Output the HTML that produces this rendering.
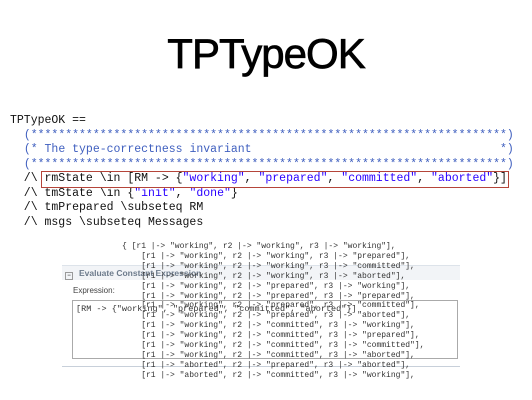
<!DOCTYPE html>
<html><head><style>
body{margin:0;width:532px;height:400px;background:#fff;position:relative;overflow:hidden;font-family:"Liberation Sans",sans-serif}
.t{position:absolute;left:0;width:532px;top:30px;text-align:center;font-size:42px;color:#000;letter-spacing:-1px;-webkit-text-stroke:0.7px #000}
.code{position:absolute;left:10px;top:114px;font-family:"Liberation Mono",monospace;font-size:11.5px;line-height:14.5px;white-space:pre;color:#111}
.c{color:#3f5fbf}.s{color:#2a00ff}
.box{position:absolute;left:41px;top:171px;width:466px;height:15px;border:1px solid #b5453a}
.panel{position:absolute;left:62px;top:265px;width:398px;height:100px;border-top:1px solid #dde3ea;border-bottom:1px solid #c8d0da}
.ph{position:absolute;left:0;top:0;width:398px;height:14px;background:#f2f4f7;font-size:8.5px;font-weight:bold;color:#6d7b8c;line-height:14px}
.ph span{display:inline-block;width:6px;height:6px;border:1px solid #999;margin:0 6px 0 3px;vertical-align:-1px;font-size:6px;line-height:6px;text-align:center;color:#555}
.ex{position:absolute;left:11px;top:20px;font-size:8px;color:#444}
.tb{position:absolute;left:10px;top:34px;width:384px;height:57px;border:1px solid #aaa;background:#fff}
.tb div{font-family:"Liberation Mono",monospace;font-size:8.5px;color:#333;margin:3px 3px}
.ov{position:absolute;left:122px;top:242px;font-family:"Liberation Mono",monospace;font-size:8px;line-height:9.9px;white-space:pre;color:#333}
</style></head><body>
<div class="t">TPTypeOK</div>
<div class="code">TPTypeOK ==
  <span class="c">(*********************************************************************)</span>
  <span class="c">(* The type-correctness invariant                                    *)</span>
  <span class="c">(*********************************************************************)</span>
  /\ rmState \in [RM -&gt; {<span class="s">"working"</span>, <span class="s">"prepared"</span>, <span class="s">"committed"</span>, <span class="s">"aborted"</span>}]
  /\ tmState \in {<span class="s">"init"</span>, <span class="s">"done"</span>}
  /\ tmPrepared \subseteq RM
  /\ msgs \subseteq Messages</div>
<div class="box"></div>
<div class="panel">
<div class="ph"><span>−</span>Evaluate Constant Expression</div>
<div class="ex">Expression:</div>
<div class="tb"><div>[RM -&gt; {"working", "prepared", "committed", "aborted"}]</div></div>
</div>
<div class="ov">{ [r1 |-&gt; "working", r2 |-&gt; "working", r3 |-&gt; "working"],
    [r1 |-&gt; "working", r2 |-&gt; "working", r3 |-&gt; "prepared"],
    [r1 |-&gt; "working", r2 |-&gt; "working", r3 |-&gt; "committed"],
    [r1 |-&gt; "working", r2 |-&gt; "working", r3 |-&gt; "aborted"],
    [r1 |-&gt; "working", r2 |-&gt; "prepared", r3 |-&gt; "working"],
    [r1 |-&gt; "working", r2 |-&gt; "prepared", r3 |-&gt; "prepared"],
    [r1 |-&gt; "working", r2 |-&gt; "prepared", r3 |-&gt; "committed"],
    [r1 |-&gt; "working", r2 |-&gt; "prepared", r3 |-&gt; "aborted"],
    [r1 |-&gt; "working", r2 |-&gt; "committed", r3 |-&gt; "working"],
    [r1 |-&gt; "working", r2 |-&gt; "committed", r3 |-&gt; "prepared"],
    [r1 |-&gt; "working", r2 |-&gt; "committed", r3 |-&gt; "committed"],
    [r1 |-&gt; "working", r2 |-&gt; "committed", r3 |-&gt; "aborted"],
    [r1 |-&gt; "aborted", r2 |-&gt; "prepared", r3 |-&gt; "aborted"],
    [r1 |-&gt; "aborted", r2 |-&gt; "committed", r3 |-&gt; "working"],</div>
</body></html>
